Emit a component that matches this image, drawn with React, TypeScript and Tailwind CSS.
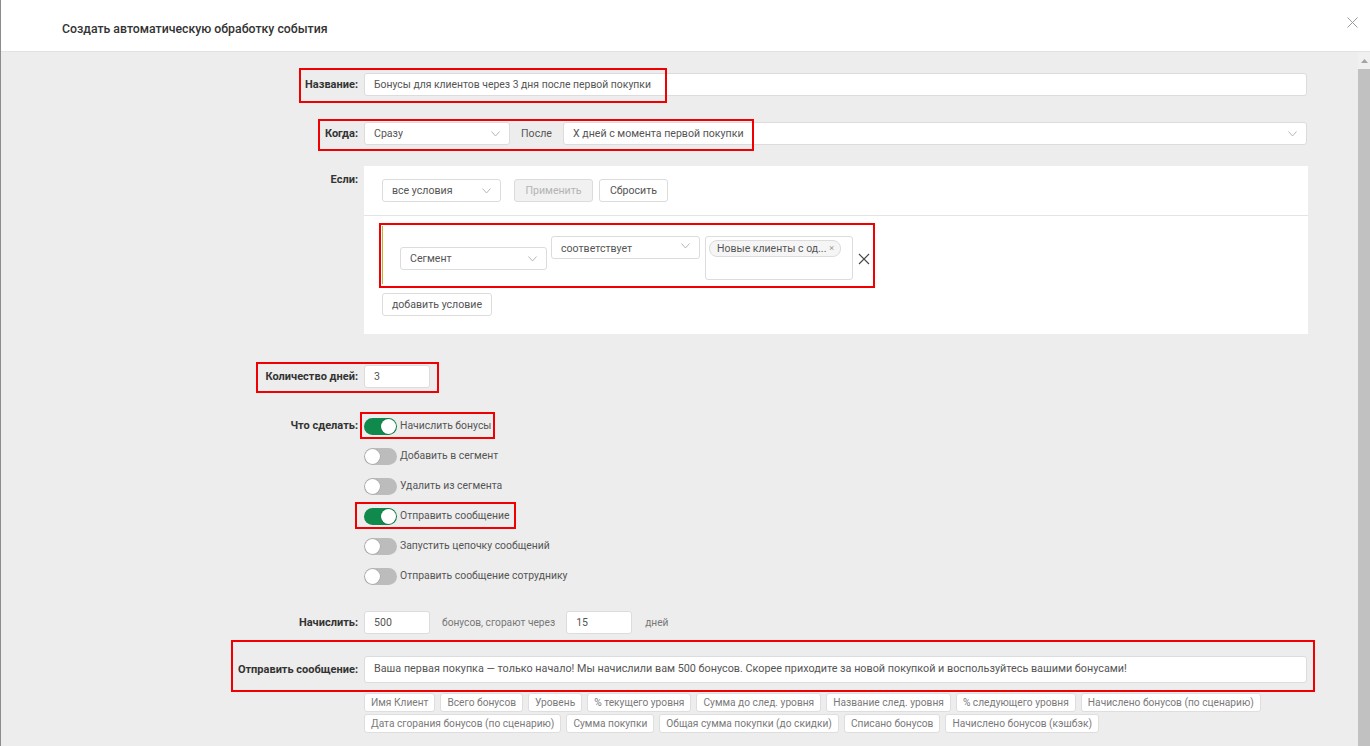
import React from "react"

const font = "font-['Roboto',sans-serif]"

function Chevron() {
  return (
    <svg width="9" height="6" viewBox="0 0 9 6" className="flex-shrink-0">
      <path d="M0.5 0.5 L4.5 5 L8.5 0.5" fill="none" stroke="#b8b8b8" strokeWidth="1" />
    </svg>
  )
}

function Select({ text, className = "" }: { text: string; className?: string }) {
  return (
    <div
      className={`h-[23px] bg-white border border-[#dcdcdc] rounded-[3px] flex items-center justify-between pl-[9px] pr-[9px] text-[10.6px] text-[#555] ${className}`}
    >
      <span className="truncate">{text}</span>
      <Chevron />
    </div>
  )
}

function Input({ value, className = "" }: { value: string; className?: string }) {
  return (
    <div
      className={`h-[23px] bg-white border border-[#dcdcdc] rounded-[3px] flex items-center px-[9px] text-[#555] ${className}`}
    >
      {value}
    </div>
  )
}

function Toggle({ on, label }: { on: boolean; label: string }) {
  return (
    <div className="h-[30px] flex items-center">
      <div
        className={`relative w-[33px] h-[17px] rounded-full flex-shrink-0 ${on ? "bg-[#0f8a4c]" : "bg-[#bcbcbc]"}`}
      >
        <div
          className={`absolute top-[1px] w-[15px] h-[15px] rounded-full bg-white shadow-[0_0_0_0.5px_rgba(0,0,0,0.15)] ${
            on ? "right-[1px]" : "left-[1px]"
          }`}
        ></div>
      </div>
      <span className="ml-[3px] text-[10.4px] text-[#555]">{label}</span>
    </div>
  )
}

function Row({ label, children, className = "", labelClass = "" }: any) {
  return (
    <div className={`flex ${className}`}>
      <div className={`w-[357px] text-right text-[11px] font-bold text-[#333] flex-shrink-0 ${labelClass}`}>{label}</div>
      <div className="ml-[6px] w-[943px]">{children}</div>
    </div>
  )
}

const tags1 = [
  "Имя Клиент",
  "Всего бонусов",
  "Уровень",
  "% текущего уровня",
  "Сумма до след. уровня",
  "Название след. уровня",
  "% следующего уровня",
  "Начислено бонусов (по сценарию)",
]
const tags2 = [
  "Дата сгорания бонусов (по сценарию)",
  "Сумма покупки",
  "Общая сумма покупки (до скидки)",
  "Списано бонусов",
  "Начислено бонусов (кэшбэк)",
]

function Tag({ text }: { text: string }) {
  return (
    <div className="h-[19px] px-[6px] bg-white border border-[#dedede] rounded-[3px] flex items-center text-[10.2px] text-[#7a7a7a] whitespace-nowrap">
      {text}
    </div>
  )
}

export default function App() {
  const boxes = [
    "left-[298px] top-[16px] w-[368px] h-[35px]",
    "left-[317px] top-[67px] w-[436px] h-[32px]",
    "left-[378px] top-[171px] w-[496px] h-[65px]",
    "left-[255px] top-[310px] w-[183px] h-[31px]",
    "left-[359px] top-[360px] w-[135px] h-[27px]",
    "left-[354px] top-[450px] w-[161px] h-[27px]",
    "left-[230px] top-[588px] w-[1084px] h-[52px]",
  ]

  return (
    <div className={`w-[1370px] h-[746px] overflow-hidden flex flex-col bg-white border-l border-[#8c8c8c] ${font}`}>
      {/* header */}
      <div className="h-[52px] flex-shrink-0 bg-white border-b border-[#e2e2e2] flex justify-between items-start">
        <div className="mt-[20px] ml-[61px] text-[12.3px] font-medium text-[#333]">
          Создать автоматическую обработку события
        </div>
        <svg width="11" height="11" viewBox="0 0 11 11" className="mt-[17px] mr-[12px]">
          <path d="M0.5 0.5 L10.5 10.5 M10.5 0.5 L0.5 10.5" stroke="#9a9a9a" strokeWidth="1" />
        </svg>
      </div>

      {/* body */}
      <div className="flex-1 flex bg-[#ededed] min-h-0">
        <div className="relative flex-1 pt-[21px]">
          <Row label="Название:" labelClass="leading-[23px]">
            <Input value="Бонусы для клиентов через 3 дня после первой покупки" className="text-[10.4px]" />
          </Row>

          <Row label="Когда:" className="mt-[26px]" labelClass="leading-[23px]">
            <div className="flex items-center">
              <Select text="Сразу" className="w-[146px]" />
              <div className="w-[53px] h-[23px] flex items-center justify-center text-[10.6px] text-[#555]">После</div>
              <Select text="X дней с момента первой покупки" className="flex-1" />
            </div>
          </Row>

          <Row label="Если:" className="mt-[21px]" labelClass="pt-[6px]">
            <div className="bg-white h-[168px] w-[944px]">
              <div className="h-[50px] border-b border-[#e4e4e4] flex items-start pt-[13px] pl-[18px]">
                <Select text="все условия" className="w-[119px]" />
                <div className="ml-[13px] w-[79px] h-[23px] bg-[#f1f1f1] border border-[#dcdcdc] rounded-[3px] flex items-center justify-center text-[10.6px] text-[#b4b4b4]">
                  Применить
                </div>
                <div className="ml-[6px] w-[69px] h-[23px] bg-white border border-[#dcdcdc] rounded-[3px] flex items-center justify-center text-[10.6px] text-[#555]">
                  Сбросить
                </div>
              </div>
              <div className="pl-[18px] pt-[10px]">
                <div className="flex items-start h-[58px] border-l border-[#a5c23a] pl-[17px]">
                  <Select text="Сегмент" className="w-[147px] mt-[21px]" />
                  <div className="ml-[4px] mt-[10px] w-[149px] h-[23px] bg-white border border-[#dcdcdc] rounded-[3px] flex items-start justify-between pl-[9px] pr-[9px] pt-[4px] text-[10.6px] text-[#555]">
                    <span>соответствует</span>
                    <div className="mt-[2px]">
                      <Chevron />
                    </div>
                  </div>
                  <div className="ml-[5px] mt-[10px] w-[148px] h-[44px] bg-white border border-[#dcdcdc] rounded-[3px] pl-[3px] pt-[3px]">
                    <div className="w-[132px] h-[17px] bg-[#f5f5f5] border border-[#dcdcdc] rounded-[8px] flex items-center justify-between pl-[7px] pr-[6px] text-[10.5px] text-[#555]">
                      <span className="whitespace-nowrap">Новые клиенты с од...</span>
                      <span className="text-[9px] text-[#999]">×</span>
                    </div>
                  </div>
                  <svg width="12" height="12" viewBox="0 0 12 12" className="ml-[5px] mt-[27px]">
                    <path d="M1 1 L11 11 M11 1 L1 11" stroke="#444" strokeWidth="1.1" />
                  </svg>
                </div>
                <div className="mt-[9px] w-[110px] h-[23px] bg-white border border-[#dcdcdc] rounded-[3px] flex items-center justify-center text-[10.6px] text-[#555]">
                  добавить условие
                </div>
              </div>
            </div>
          </Row>

          <Row label="Количество дней:" className="mt-[31px]" labelClass="leading-[23px]">
            <Input value="3" className="w-[66px] text-[10.6px]" />
          </Row>

          <Row label="Что сделать:" className="mt-[23px]" labelClass="leading-[30px]">
            <Toggle on label="Начислить бонусы" />
            <Toggle on={false} label="Добавить в сегмент" />
            <Toggle on={false} label="Удалить из сегмента" />
            <Toggle on label="Отправить сообщение" />
            <Toggle on={false} label="Запустить цепочку сообщений" />
            <Toggle on={false} label="Отправить сообщение сотруднику" />
          </Row>

          <Row label="Начислить:" className="mt-[20px]" labelClass="leading-[23px]">
            <div className="flex items-center text-[10.2px] text-[#777]">
              <Input value="500" className="w-[66px] text-[10.6px]" />
              <span className="ml-[12px]">бонусов, сгорают через</span>
              <Input value="15" className="w-[66px] ml-[11px] text-[10.6px]" />
              <span className="ml-[13px]">дней</span>
            </div>
          </Row>

          <Row label="Отправить сообщение:" className="mt-[22px]" labelClass="leading-[27px]">
            <Input
              className="h-[27px] text-[10.8px]"
              value="Ваша первая покупка — только начало! Мы начислили вам 500 бонусов. Скорее приходите за новой покупкой и воспользуйтесь вашими бонусами!"
            />
          </Row>

          <Row label="" className="mt-[10px]">
            <div className="flex flex-col gap-[2px]">
              <div className="flex gap-[5px]">
                {tags1.map((t) => (
                  <Tag key={t} text={t} />
                ))}
              </div>
              <div className="flex gap-[5px]">
                {tags2.map((t) => (
                  <Tag key={t} text={t} />
                ))}
              </div>
            </div>
          </Row>

          {/* red annotation frames */}
          {boxes.map((b, i) => (
            <div key={i} className={`absolute border-2 border-[#f00000] pointer-events-none ${b}`}></div>
          ))}
        </div>

        {/* scrollbar */}
        <div className="w-[12px] flex-shrink-0 flex flex-col bg-[#f0f0f0]">
          <div className="h-[17px] flex items-center justify-center">
            <svg width="7" height="4" viewBox="0 0 7 4">
              <path d="M0 4 L3.5 0 L7 4 Z" fill="#a3a3a3" />
            </svg>
          </div>
          <div className="flex-1 bg-[#c1c1c1]"></div>
        </div>
      </div>
    </div>
  )
}
